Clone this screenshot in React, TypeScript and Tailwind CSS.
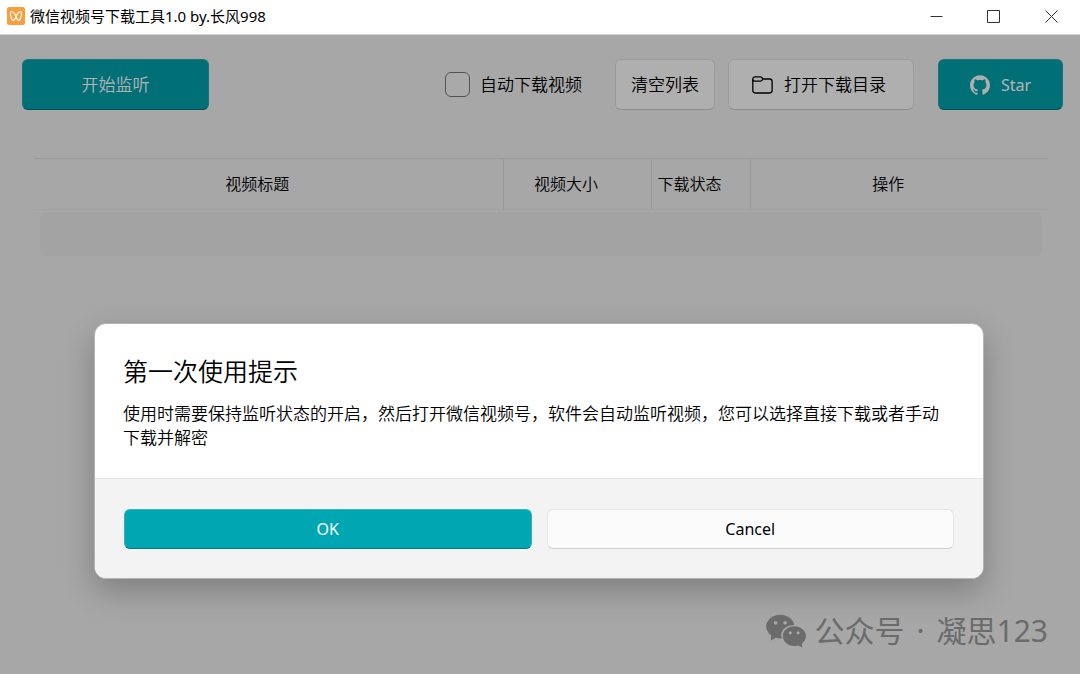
import { useState } from 'react';
import { SiGithub } from 'react-icons/si';

const columns = [
    { title: '视频标题', width: 'w-[469px]' },
    { title: '视频大小', width: 'w-[148px]' },
    { title: '下载状态', width: 'w-[99px]' },
    { title: '操作', width: '' },
];

function AppLogo() {
    return (
        <svg className="size-[18px]" viewBox="0 0 18 18" fill="none">
            <rect width="18" height="18" rx="2.5" fill="#fa9d3b" />
            <path
                d="M9 9.8C8.2 7.2 6 4.3 4.4 4.5C2.9 4.8 3.5 9 4.7 11.8C5.3 13.3 6.2 13.9 7.1 13C8 12.1 8.6 11 9 9.8ZM9 9.8C9.8 7.2 12 4.3 13.6 4.5C15.1 4.8 14.5 9 13.3 11.8C12.7 13.3 11.8 13.9 10.9 13C10 12.1 9.4 11 9 9.8Z"
                stroke="#fff"
                strokeWidth="1.2"
                strokeLinejoin="round"
            />
        </svg>
    );
}

function FolderIcon() {
    return (
        <svg className="w-[21px] h-[18px]" viewBox="0 0 21 18" fill="none" stroke="currentColor" strokeWidth="1.3" strokeLinejoin="round">
            <path d="M0.8 3.2C0.8 1.9 1.8 0.8 3.2 0.8H8.2C9.6 0.8 10.4 1.8 10.6 3H17.6C19 3 20.1 4.1 20.1 5.4V14.6C20.1 16 19 17 17.6 17H3.2C1.8 17 0.8 16 0.8 14.6V3.2Z" />
            <path d="M0.8 3.4C0.8 4.6 1.6 5.2 2.8 5.2H8.2C9.6 5.2 10.4 4.2 10.6 3" />
        </svg>
    );
}

function WechatIcon() {
    return (
        <svg className="w-10 h-[34px]" viewBox="0 0 40 34" fill="currentColor">
            <path
                fillRule="evenodd"
                d="M14.3 0.8C6.4 0.8 0.2 6 0.2 12.6C0.2 16.3 2.2 19.5 5.4 21.7L4.6 26.4L9.8 23.7C11.6 24.3 13.6 24.5 15.8 24.4C13.4 17.4 19.2 11 28.2 11C27.2 5 21.2 0.8 14.3 0.8ZM9.7 6.9A1.9 1.9 0 1 1 9.7 10.7A1.9 1.9 0 1 1 9.7 6.9ZM19.1 6.9A1.9 1.9 0 1 1 19.1 10.7A1.9 1.9 0 1 1 19.1 6.9Z"
            />
            <path
                fillRule="evenodd"
                d="M28.3 12.2C21.8 12.2 16.8 16.6 16.8 22.1C16.8 27.6 21.8 32 28.3 32C29.8 32 31.2 31.8 32.4 31.4L36.4 33.5L35.7 29.7C38.3 27.9 39.9 25.2 39.9 22.1C39.9 16.6 34.8 12.2 28.3 12.2ZM24.3 17.2A1.6 1.6 0 1 1 24.3 20.4A1.6 1.6 0 1 1 24.3 17.2ZM32.1 17.2A1.6 1.6 0 1 1 32.1 20.4A1.6 1.6 0 1 1 32.1 17.2Z"
            />
        </svg>
    );
}

function TitleBar() {
    return (
        <header className="flex h-[35px] items-center justify-between border-b border-[#d4d4d4] bg-white pb-0.5 pl-[7px]">
            <div className="flex items-center gap-[5px]">
                <AppLogo />
                <h1 className="text-[15px] leading-5 font-normal text-black">微信视频号下载工具1.0 by.长风998</h1>
            </div>
            <div className="flex h-full text-[#333]">
                <button aria-label="最小化" className="flex w-14 items-center justify-center">
                    <svg className="size-[13px]" viewBox="0 0 13 13" stroke="currentColor"><path d="M0.5 6.5H12.5" /></svg>
                </button>
                <button aria-label="最大化" className="flex w-[58px] items-center justify-center">
                    <svg className="size-[13px]" viewBox="0 0 13 13" fill="none" stroke="currentColor"><path d="M0.5 0.5H12.5V12.5H0.5Z" /></svg>
                </button>
                <button aria-label="关闭" className="flex w-[58px] items-center justify-center">
                    <svg className="size-[13px]" viewBox="0 0 13 13" stroke="currentColor"><path d="M0.5 0.5L12.5 12.5M12.5 0.5L0.5 12.5" /></svg>
                </button>
            </div>
        </header>
    );
}

function Toolbar() {
    const [autoDownload, setAutoDownload] = useState(false);
    const plain = 'flex h-[51px] items-center justify-center rounded-md border border-[#e0e0e0] border-b-[#cccccc] bg-[#fbfbfb] text-[17px] text-black';
    const primary = 'flex h-[51px] items-center justify-center rounded-md border border-[#1fa9b3] border-b-[#007780] bg-[#009faa] text-white';

    return (
        <div className="flex items-center pt-6 pr-[17px] pl-[22px]">
            <button className={`${primary} w-[187px] text-[17px]`}>开始监听</button>
            <label className="ml-auto flex items-center gap-2.5 text-[17px]">
                <input
                    type="checkbox"
                    checked={autoDownload}
                    onChange={(e) => setAutoDownload(e.target.checked)}
                    className="size-[25px] appearance-none rounded-md border border-[#777] bg-[#f3f3f3] checked:bg-[#009faa]"
                />
                自动下载视频
            </label>
            <button className={`${plain} ml-[33px] w-[100px]`}>清空列表</button>
            <button className={`${plain} ml-[13px] w-[186px] gap-[11px] pr-1`}>
                <FolderIcon />
                打开下载目录
            </button>
            <a href="#" className={`${primary} ml-6 w-[125px] gap-[11px] text-base font-normal`}>
                <SiGithub className="size-5 text-[#f9f9f9]" />
                Star
            </a>
        </div>
    );
}

function VideoTable() {
    return (
        <div className="mt-12 pr-8 pl-[34px]">
            <table className="w-full table-fixed border-collapse">
                <thead>
                    <tr className="h-[51px] border-t border-b border-t-[#dcdcdc] border-b-[#e9e9e9]">
                        {columns.map((column) => (
                            <th key={column.title} className={`${column.width} border-r border-[#dfdfdf] pr-[22px] text-center text-base font-[350] last:border-r-0`}>
                                {column.title}
                            </th>
                        ))}
                    </tr>
                </thead>
                <tbody>
                    <tr>
                        <td colSpan={4} className="px-1.5 pt-0.5">
                            <div className="h-11 rounded-md bg-[#eaeaea]" />
                        </td>
                    </tr>
                </tbody>
            </table>
        </div>
    );
}

function FirstUseDialog({ onClose }: { onClose: () => void }) {
    return (
        <div className="absolute inset-0 bg-black/30 pt-[288px] pr-[96px] pl-[94px]">
            <div role="dialog" aria-labelledby="dialog-title" className="overflow-hidden rounded-xl border border-[#b4b4b4] bg-white shadow-[0_12px_32px_rgba(0,0,0,0.24)]">
                <div className="px-7 pt-[29px] pb-7">
                    <h2 id="dialog-title" className="text-[25px] leading-9 text-black">第一次使用提示</h2>
                    <p className="mt-[13px] text-[17px] leading-6 text-black">
                        使用时需要保持监听状态的开启，然后打开微信视频号，软件会自动监听视频，您可以选择直接下载或者手动下载并解密
                    </p>
                </div>
                <div className="grid grid-cols-2 gap-[15px] border-t border-[#e5e5e5] bg-[#f3f3f3] px-[29px] pt-[30px] pb-[29px]">
                    <button onClick={onClose} className="h-10 rounded-md border border-[#33b3bb] border-b-[#007f88] bg-[#00a7b3] text-base font-normal text-white">OK</button>
                    <button onClick={onClose} className="h-10 rounded-md border border-[#e5e5e5] border-b-[#d0d0d0] bg-[#fbfbfb] text-base font-normal text-black">Cancel</button>
                </div>
            </div>
        </div>
    );
}

export default function App() {
    const [open, setOpen] = useState(true);

    return (
        <div className="flex min-h-screen flex-col bg-[#f0f0f0] font-['Noto_Sans','Noto_Sans_CJK_SC',sans-serif] font-[350]">
            <TitleBar />
            <main className="relative flex-1">
                <Toolbar />
                <VideoTable />
                {open && <FirstUseDialog onClose={() => setOpen(false)} />}
                <div className="absolute right-8 bottom-5 flex items-center gap-3 text-[30px] leading-[46px] font-normal text-[#6b6b6b]">
                    <div className="flex items-center gap-2">
                        <WechatIcon />
                        <span>公众号</span>
                    </div>
                    <span>·</span>
                    <span>凝思123</span>
                </div>
            </main>
        </div>
    );
}
